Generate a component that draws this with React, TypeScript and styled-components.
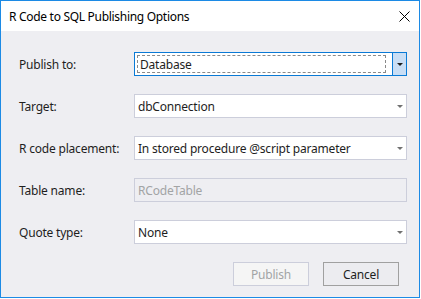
import { Fragment } from "react";
import styled, { createGlobalStyle } from "styled-components";

const GlobalStyle = createGlobalStyle`
  html, body {
    margin: 0;
    padding: 0;
    background: #ffffff;
  }
  body {
    font-family: "Noto Sans", "Open Sans", sans-serif;
    font-size: 12px;
    color: #1e1e1e;
  }
`;

const Window = styled.div`
  width: 420px;
  height: 298px;
  box-sizing: border-box;
  border: 1px solid #1c8ae5;
  display: flex;
  flex-direction: column;
  background: #eeeef2;
`;

const TitleBar = styled.div`
  height: 30px;
  flex: none;
  background: #ffffff;
  display: flex;
  align-items: center;
  justify-content: space-between;
  padding: 0 9px 0 8px;
`;

const Title = styled.span`
  font-size: 12px;
  color: #000000;
  letter-spacing: -0.3px;
`;

const Body = styled.div`
  flex: 1;
  display: flex;
  flex-direction: column;
  padding: 21px 12px 11px 18px;
`;

const Form = styled.div`
  display: grid;
  grid-template-columns: 115px 1fr;
  grid-auto-rows: 24px;
  row-gap: 18px;
  align-items: center;
`;

const Label = styled.label`
  font-size: 12px;
  color: #1e1e1e;
  letter-spacing: -0.2px;
`;

const Combo = styled.div<{ $focused?: boolean; $disabled?: boolean }>`
  height: 24px;
  box-sizing: border-box;
  display: flex;
  align-items: stretch;
  border: 1px solid ${(p) => (p.$focused ? "#0a7ad6" : "#cccedb")};
  background: ${(p) => (p.$disabled ? "#eeeef2" : "#ffffff")};
`;

const ComboText = styled.div<{ $focused?: boolean; $disabled?: boolean }>`
  flex: 1;
  display: flex;
  align-items: center;
  padding-left: 2px;
  margin: ${(p) => (p.$focused ? "2px 6px 2px 2px" : "0")};
  border: ${(p) => (p.$focused ? "1px dashed #8a8a8a" : "1px solid transparent")};
  color: ${(p) => (p.$disabled ? "#a2a4a5" : "#1e1e1e")};
  letter-spacing: -0.2px;
  white-space: nowrap;
  overflow: hidden;
`;

const Arrow = styled.div<{ $focused?: boolean }>`
  width: 13px;
  flex: none;
  display: flex;
  align-items: center;
  justify-content: center;
  background: ${(p) => (p.$focused ? "#c9def5" : "transparent")};
  border-left: 1px solid ${(p) => (p.$focused ? "#0a7ad6" : "transparent")};
  &::after {
    content: "";
    width: 0;
    height: 0;
    border-left: 3px solid transparent;
    border-right: 3px solid transparent;
    border-top: 3px solid ${(p) => (p.$focused ? "#1e1e1e" : "#717171")};
    margin-top: 1px;
  }
`;

const Buttons = styled.div`
  margin-top: auto;
  display: flex;
  justify-content: flex-end;
  gap: 14px;
  padding-right: 8px;
`;

const Button = styled.button<{ $disabled?: boolean }>`
  width: 76px;
  height: 24px;
  box-sizing: border-box;
  font-family: inherit;
  font-size: 12px;
  letter-spacing: -0.2px;
  padding: 0;
  color: ${(p) => (p.$disabled ? "#a2a4a5" : "#1e1e1e")};
  background: ${(p) => (p.$disabled ? "#f5f5f5" : "#ececf0")};
  border: 1px solid ${(p) => (p.$disabled ? "#cccedb" : "#a0a0a0")};
`;

const rows = [
  { label: "Publish to:", value: "Database", focused: true },
  { label: "Target:", value: "dbConnection" },
  { label: "R code placement:", value: "In stored procedure @script parameter" },
  { label: "Table name:", value: "RCodeTable", disabled: true },
  { label: "Quote type:", value: "None" },
];

export default function App() {
  return (
    <>
      <GlobalStyle />
      <Window>
        <TitleBar>
          <Title>R Code to SQL Publishing Options</Title>
          <svg width="11" height="11" viewBox="0 0 11 11">
            <path d="M0.5 0.5 L10.5 10.5 M10.5 0.5 L0.5 10.5" stroke="#000" strokeWidth="1" />
          </svg>
        </TitleBar>
        <Body>
          <Form>
            {rows.map((r) => (
              <Fragment key={r.label}>
                <Label>{r.label}</Label>
                <Combo $focused={r.focused} $disabled={r.disabled}>
                  <ComboText $focused={r.focused} $disabled={r.disabled}>
                    {r.value}
                  </ComboText>
                  {!r.disabled && <Arrow $focused={r.focused} />}
                </Combo>
              </Fragment>
            ))}
          </Form>
          <Buttons>
            <Button $disabled>Publish</Button>
            <Button>Cancel</Button>
          </Buttons>
        </Body>
      </Window>
    </>
  );
}
